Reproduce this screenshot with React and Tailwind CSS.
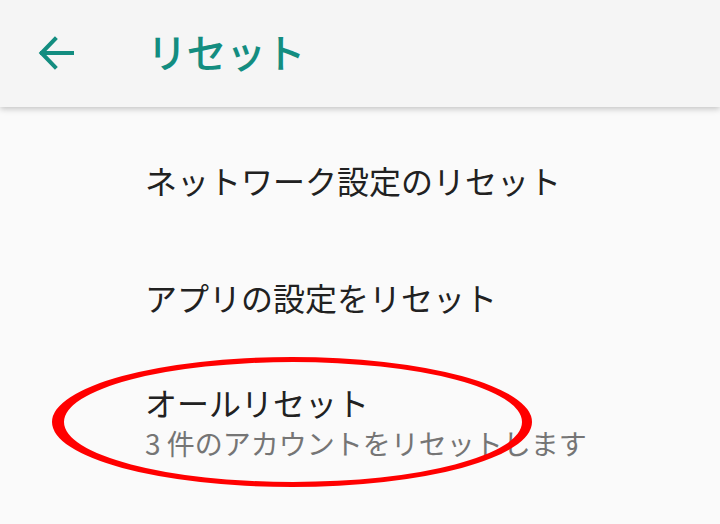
import React from 'react';

const font = { fontFamily: '"Noto Sans CJK JP", "Noto Sans", sans-serif' };

function BackArrow() {
    return (
        <svg width="36" height="36" viewBox="0 0 36 36" fill="none">
            <path d="M34 18H4M17 4L3.5 18L17 32" stroke="#138d80" strokeWidth="4" strokeLinecap="square" />
        </svg>
    );
}

function Item({ title, subtitle, className }) {
    return (
        <div className={`pl-[145px] ${className}`}>
            <div className="text-[32px] leading-[40px] text-[#212121]">{title}</div>
            {subtitle && <div className="mt-[2px] text-[28px] leading-[38px] text-[#757575]">{subtitle}</div>}
        </div>
    );
}

export default function App() {
    return (
        <div className="relative w-[720px] h-[524px] overflow-hidden bg-[#fafafa]" style={font}>
            {/* App bar */}
            <div className="relative z-10 h-[107px] bg-[#f5f5f5] flex items-center shadow-[0_2px_6px_rgba(0,0,0,0.22)]">
                <div className="w-[147px] pl-[38px] flex items-center -mt-[2px]">
                    <BackArrow />
                </div>
                <div className="text-[40px] font-medium text-[#138d80] -mt-[6px] tracking-[-0.5px]">リセット</div>
            </div>

            {/* List */}
            <div className="pt-[14px]">
                <Item title="ネットワーク設定のリセット" className="h-[117px] flex flex-col justify-center" />
                <Item title="アプリの設定をリセット" className="h-[117px] flex flex-col justify-center" />
                <Item title="オールリセット" subtitle="3 件のアカウントをリセットします" className="pt-[27px]" />
            </div>

            {/* Red annotation ellipse */}
            <svg className="absolute inset-0 pointer-events-none" width="720" height="524" viewBox="0 0 720 524">
                <path
                    fillRule="evenodd"
                    fill="#ff0000"
                    d="M52 422a240 65 0 1 0 480 0a240 65 0 1 0 -480 0Z M64 422a229 60 0 1 0 458 0a229 60 0 1 0 -458 0Z"
                />
            </svg>
        </div>
    );
}
